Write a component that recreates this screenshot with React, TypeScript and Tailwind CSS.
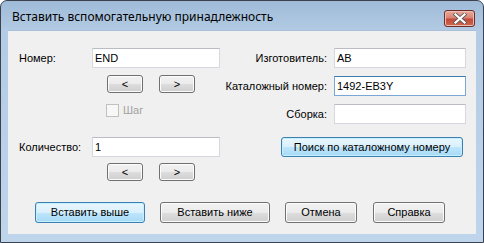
import type { ReactNode } from 'react'

const ui = { fontFamily: '"Liberation Sans", Arial, sans-serif' }
const title = { fontFamily: '"Noto Sans", "Open Sans", sans-serif' }

function Btn({ w, h, blue, children }: { w: string; h: string; blue?: boolean; children: ReactNode }) {
  const look = blue
    ? 'border-[#3c7fb1] bg-[linear-gradient(#eaf6fd_0%,#d9f0fc_50%,#bee6fd_51%,#a7d9f5_100%)] shadow-[inset_0_0_0_1px_#c4f0ff]'
    : 'border-[#707070] bg-[linear-gradient(#f2f2f2_0%,#ebebeb_50%,#dddddd_51%,#cfcfcf_100%)] shadow-[inset_0_0_0_1px_#fcfcfc]'
  return (
    <div className={`${w} ${h} ${look} shrink-0 border rounded-[3px] flex items-center justify-center text-[11px] text-black`}>
      {children}
    </div>
  )
}

function Field({ w, value, focused }: { w: string; value?: string; focused?: boolean }) {
  const border = focused
    ? 'border-[#7aa7d6] border-t-[#3d7bad]'
    : 'border-[#d5d8de] border-t-[#b9bcc2]'
  return (
    <div className={`${w} h-[20px] shrink-0 border ${border} bg-white flex items-center pl-[2px] text-[11px] text-black`}>
      {value}
    </div>
  )
}

function Arrows() {
  return (
    <div className="flex gap-[16px] pl-[99px]">
      <Btn w="w-[36px]" h="h-[18px]">&lt;</Btn>
      <Btn w="w-[36px]" h="h-[18px]">&gt;</Btn>
    </div>
  )
}

function RightRow({ label, value, focused }: { label: string; value?: string; focused?: boolean }) {
  return (
    <div className="flex items-center h-[20px]">
      <div className="w-[108px] pr-[1px] text-right text-[11px]">{label}</div>
      <div className="w-[6px]" />
      <Field w="w-[132px]" value={value} focused={focused} />
    </div>
  )
}

export default function App() {
  return (
    <div className="w-[484px] h-[243px] bg-white">
      <div className="w-[484px] h-[243px] border border-[#3a4250] rounded-t-[7px] overflow-hidden bg-[linear-gradient(#9fbbd8_0px,#b3cbe4_30px,#bfd5ec_243px)] flex flex-col">
        <div className="h-[29px] flex items-start shrink-0">
          <div className="pl-[11px] pt-[8px] text-[12px] text-black leading-[15px] flex-1" style={title}>
            Вставить вспомогательную принадлежность
          </div>
          <div className="mt-[9px] mr-[8px] w-[31px] h-[17px] rounded-[3px] border border-[#6b2c2c] bg-[linear-gradient(#e9a99c_0%,#d98374_45%,#c24a3a_55%,#cd6a4f_100%)] shadow-[inset_0_0_0_1px_#f1bcb0] flex items-center justify-center">
            <svg width="14" height="11" viewBox="0 0 14 11">
              <path d="M2.5 1.5 L11.5 9.5 M11.5 1.5 L2.5 9.5" stroke="#5a5a5a" strokeWidth="3.8" strokeLinecap="square" />
              <path d="M2.5 1.5 L11.5 9.5 M11.5 1.5 L2.5 9.5" stroke="#ffffff" strokeWidth="2.2" strokeLinecap="square" />
            </svg>
          </div>
        </div>
        <div className="mx-[7px] h-[204px] bg-[#f0f0f0] border-t border-[#a9c0da]" style={ui}>
          <div className="flex pt-[17px]">
            <div className="w-[212px] flex flex-col">
              <div className="flex items-center h-[20px]">
                <div className="w-[84px] pl-[11px] text-[11px]">Номер:</div>
                <Field w="w-[128px]" value="END" />
              </div>
              <div className="mt-[7px]">
                <Arrows />
              </div>
              <div className="mt-[11px] flex items-center pl-[98px] h-[13px]">
                <div className="w-[13px] h-[13px] border border-[#c0c0c0] bg-[#f7f7f7]" />
                <span className="ml-[4px] text-[11px] text-[#a0a0a0]">Шаг</span>
              </div>
              <div className="mt-[20px] flex items-center h-[20px]">
                <div className="w-[84px] pl-[11px] text-[11px]">Количество:</div>
                <Field w="w-[128px]" value="1" />
              </div>
              <div className="mt-[6px]">
                <Arrows />
              </div>
            </div>
            <div className="flex flex-col gap-[8px]">
              <RightRow label="Изготовитель:" value="AB" />
              <RightRow label="Каталожный номер:" value="1492-EB3Y" focused />
              <RightRow label="Сборка:" />
              <div className="mt-[5px] pl-[61px]">
                <Btn w="w-[182px]" h="h-[20px]" blue>Поиск по каталожному номеру</Btn>
              </div>
            </div>
          </div>
          <div className="mt-[21px] flex pl-[27px]">
            <Btn w="w-[110px]" h="h-[21px]" blue>Вставить выше</Btn>
            <div className="w-[15px] shrink-0" />
            <Btn w="w-[110px]" h="h-[21px]">Вставить ниже</Btn>
            <div className="w-[15px] shrink-0" />
            <Btn w="w-[72px]" h="h-[21px]">Отмена</Btn>
            <div className="w-[16px] shrink-0" />
            <Btn w="w-[72px]" h="h-[21px]">Справка</Btn>
          </div>
        </div>
      </div>
    </div>
  )
}
